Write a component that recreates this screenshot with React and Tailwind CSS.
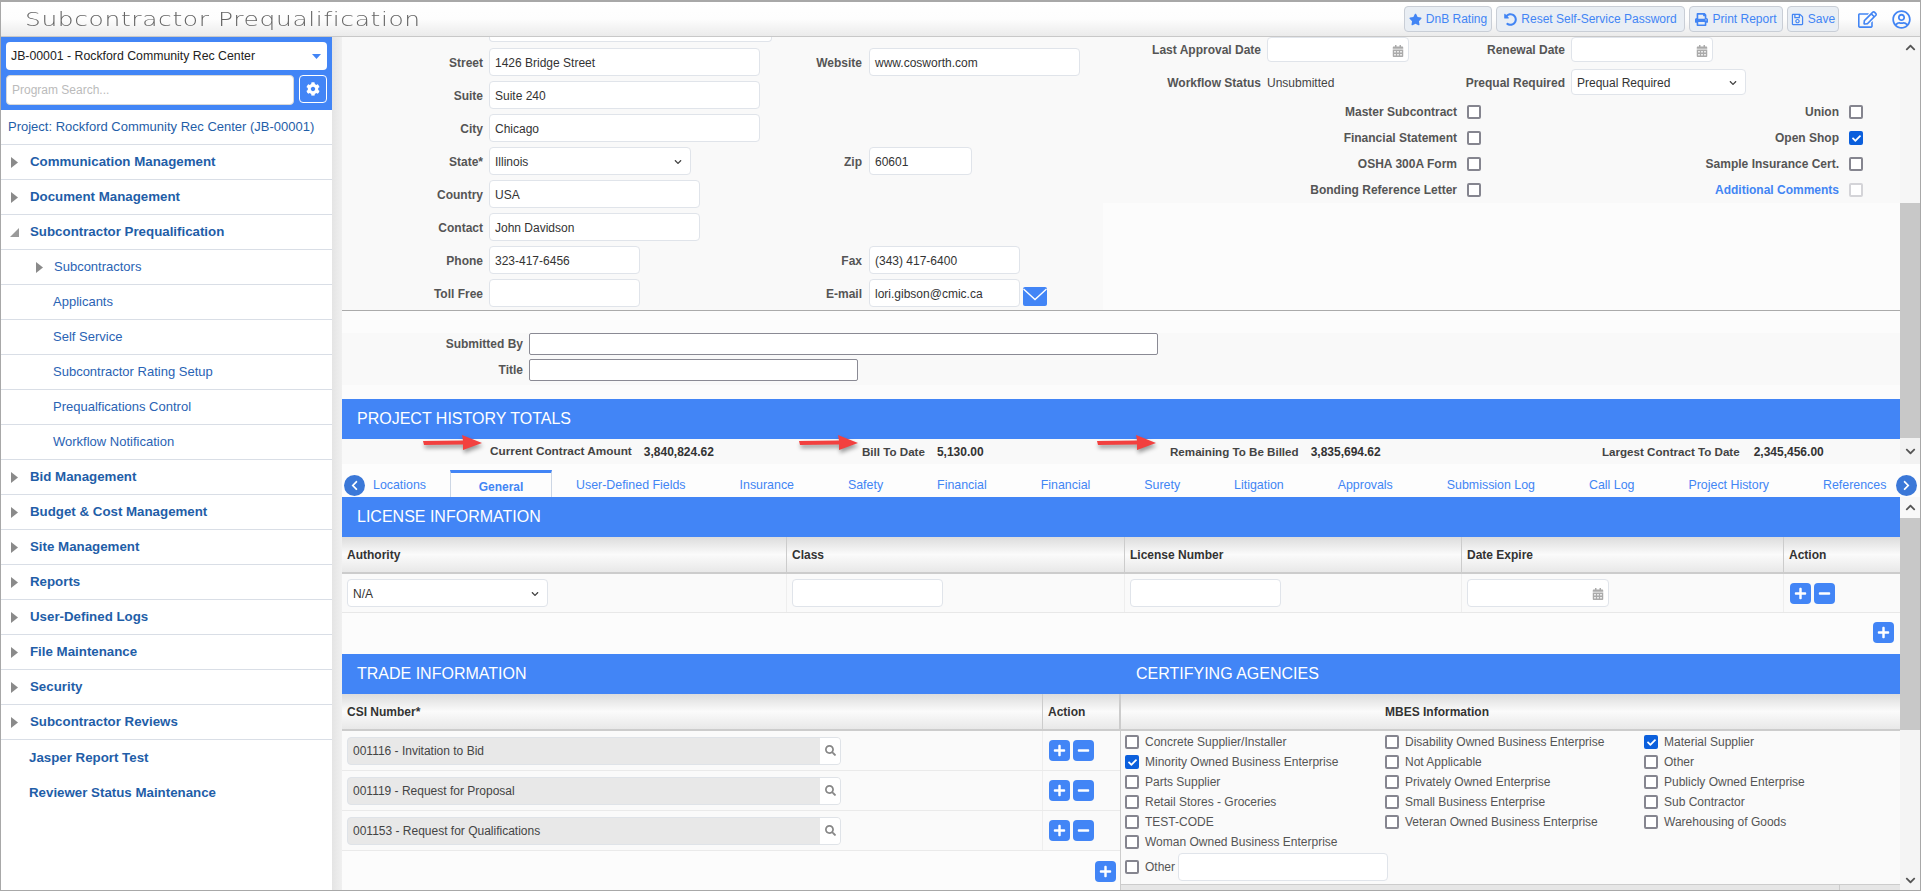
import React from "react";
import {
  FaStar, FaUndoAlt, FaPrint, FaRegSave, FaRegEdit, FaRegUserCircle, FaCog, FaCalendarAlt, FaSearch,
  FaPlus, FaMinus, FaChevronUp, FaChevronDown, FaChevronLeft, FaChevronRight, FaCheck,
} from "react-icons/fa";

const Tri = ({ open }) =>
  open ? (
    <svg width="9" height="9" viewBox="0 0 9 9" className="shrink-0"><polygon points="9,0 9,9 0,9" fill="#9a9a9a" /></svg>
  ) : (
    <svg width="7" height="11" viewBox="0 0 7 11" className="shrink-0"><polygon points="0,0 7,5.5 0,11" fill="#8a8a8a" /></svg>
  );

const menuItems = [
  { t: "Communication Management", k: "top" },
  { t: "Document Management", k: "top" },
  { t: "Subcontractor Prequalification", k: "open" },
  { t: "Subcontractors", k: "subtri" },
  { t: "Applicants", k: "sub" },
  { t: "Self Service", k: "sub" },
  { t: "Subcontractor Rating Setup", k: "sub" },
  { t: "Prequalfications Control", k: "sub" },
  { t: "Workflow Notification", k: "sub" },
  { t: "Bid Management", k: "top" },
  { t: "Budget & Cost Management", k: "top" },
  { t: "Site Management", k: "top" },
  { t: "Reports", k: "top" },
  { t: "User-Defined Logs", k: "top" },
  { t: "File Maintenance", k: "top" },
  { t: "Security", k: "top" },
  { t: "Subcontractor Reviews", k: "top" },
  { t: "Jasper Report Test", k: "plain" },
  { t: "Reviewer Status Maintenance", k: "plain" },
];

function MenuRow({ t, k }) {
  const bold = "text-[13.3px] font-bold text-[#1f5ea8]";
  const last = t === "Jasper Report Test" || t === "Reviewer Status Maintenance";
  return (
    <div className={`flex h-[35px] items-center ${last ? "" : "border-b border-[#d9dee6]"}`}>
      {k === "top" && (
        <>
          <span className="ml-[10px] w-[19px]"><Tri /></span>
          <span className={bold}>{t}</span>
        </>
      )}
      {k === "open" && (
        <>
          <span className="ml-[9px] w-[20px]"><Tri open /></span>
          <span className={bold}>{t}</span>
        </>
      )}
      {k === "plain" && <span className={`ml-[28px] ${bold}`}>{t}</span>}
      {k === "subtri" && (
        <>
          <span className="ml-[35px] w-[18px]"><Tri /></span>
          <span className="text-[13px] text-[#2a63b4]">{t}</span>
        </>
      )}
      {k === "sub" && <span className="ml-[52px] text-[13px] text-[#2a63b4]">{t}</span>}
    </div>
  );
}

function TopBtn({ icon, w, children }) {
  return (
    <div className={`flex h-[26px] ${w} items-center justify-center gap-[4px] rounded-[4px] border border-[#c9ced6] bg-[#e9eef4] text-[12px] text-[#4285f4]`}>
      <span className="text-[13px]">{icon}</span>
      {children}
    </div>
  );
}

const Label = ({ children, className = "" }) => (
  <div className={`text-right text-[12px] font-bold text-[#555] ${className}`}>{children}</div>
);

const Field = ({ w, children, className = "", h = "h-[28px]" }) => (
  <div className={`flex ${h} ${w} shrink-0 items-center rounded-[4px] border border-[#e0e4ea] bg-white px-[5px] pt-[2px] text-[12px] text-[#333] ${className}`}>
    {children}
  </div>
);

const Sel = ({ w, children, h = "h-[28px]" }) => (
  <Field w={w} h={h} className="justify-between pr-[8px]">
    <span>{children}</span>
    <FaChevronDown className="text-[8px] text-[#444]" />
  </Field>
);

const DateF = ({ w, h = "h-[26px]" }) => (
  <Field w={w} h={h} className="justify-end pr-[4px]">
    <FaCalendarAlt className="text-[12px] text-[#aaa]" />
  </Field>
);

const Cb = ({ on, dim }) => (
  <span
    className={`inline-flex h-[14px] w-[14px] shrink-0 items-center justify-center rounded-[2px] border-2 ${
      on ? "border-[#0b5fdc] bg-[#0b5fdc]" : dim ? "border-[#d4d4d8] bg-white" : "border-[#85858f] bg-white"
    }`}
  >
    {on && <FaCheck className="text-[9px] text-white" />}
  </span>
);

const Band = ({ children, className = "" }) => (
  <div className={`flex h-[40px] shrink-0 items-center bg-[#4285f6] pl-[15px] text-[16px] text-white ${className}`}>{children}</div>
);

const TH = ({ className = "", children }) => (
  <div className={`flex h-full items-center border-r border-[#ccc] px-[5px] text-[12px] font-bold text-[#333] ${className}`}>{children}</div>
);

const thead = "h-[37px] shrink-0 border-b-2 border-[#ccc] bg-linear-to-b from-[#dcdcdc] via-[#fbfbfb] to-[#e8e8e8]";

const IconBtn = ({ minus }) => (
  <span className="flex h-[21px] w-[21px] shrink-0 items-center justify-center rounded-[4px] bg-[#4285f6] text-[13px] text-white">
    {minus ? <FaMinus /> : <FaPlus />}
  </span>
);

const Arrow = ({ className }) => (
  <svg width="60" height="20" viewBox="0 0 60 20" className={`absolute ${className} drop-shadow-[1px_3px_2px_rgba(0,0,0,0.4)]`}>
    <polygon points="0,6 40,5.5 39,0 59,8 40,15 40,9.5 1,10" fill="#f2403f" />
  </svg>
);

const Scroll = ({ children, className = "" }) => (
  <div className={`flex shrink-0 items-center justify-center text-[11px] text-[#555] ${className}`}>{children}</div>
);

const Row = ({ label, children, mid }) => (
  <div className="grid h-[28px] grid-cols-[147px_289px_91px_1fr] items-center">
    <Label className="pr-[6px] pt-[2px]">{label}</Label>
    <div>{children}</div>
    {mid ? <Label className="pr-[7px] pt-[2px]">{mid[0]}</Label> : <div />}
    {mid ? mid[1] : <div />}
  </div>
);

const CheckRow = ({ a, b, on, blue, dim }) => (
  <div className="grid h-[26px] grid-cols-[354px_24px_358px_24px] items-center">
    <Label>{a}</Label>
    <span className="flex pl-[10px]"><Cb /></span>
    <Label className={blue ? "text-[#4285f4]" : ""}>{b}</Label>
    <span className="flex pl-[10px]"><Cb on={on} dim={dim} /></span>
  </div>
);

const tabs = ["User-Defined Fields", "Insurance", "Safety", "Financial", "Financial", "Surety", "Litigation", "Approvals", "Submission Log", "Call Log", "Project History", "References"];

const mbes = [
  ["Concrete Supplier/Installer", "Disability Owned Business Enterprise", "Material Supplier"],
  ["Minority Owned Business Enterprise", "Not Applicable", "Other"],
  ["Parts Supplier", "Privately Owned Enterprise", "Publicly Owned Enterprise"],
  ["Retail Stores - Groceries", "Small Business Enterprise", "Sub Contractor"],
  ["TEST-CODE", "Veteran Owned Business Enterprise", "Warehousing of Goods"],
  ["Woman Owned Business Enterprise", "", ""],
];

const Check = ({ t }) =>
  t ? (
    <div className="flex h-[20px] items-center gap-[6px] text-[12px] text-[#555]">
      <Cb on={t === "Minority Owned Business Enterprise" || t === "Material Supplier"} />
      <span>{t}</span>
    </div>
  ) : (
    <div />
  );

const trades = ["001116 - Invitation to Bid", "001119 - Request for Proposal", "001153 - Request for Qualifications"];

export default function App() {
  return (
    <div className="flex h-[891px] w-[1921px] flex-col overflow-hidden border-x border-y border-[#a8a8a8] border-t-2 bg-[#fcfcfc] [font-family:Liberation_Sans,Arial,sans-serif]">
      {/* top bar */}
      <header className="flex h-[35px] shrink-0 items-center justify-between border-b border-[#c8c8c8] bg-linear-to-b from-white via-[#fdfdfd] to-[#ebebeb] pl-[24px] pr-[9px]">
        <div className="origin-left scale-x-[1.246] text-[20px] font-extralight tracking-[0.5px] text-[#666] [font-family:DejaVu_Sans,sans-serif]">Subcontractor Prequalification</div>
        <div className="flex items-center">
          <div className="flex items-center gap-[4px]">
            <TopBtn w="w-[88px]" icon={<FaStar />}>DnB Rating</TopBtn>
            <TopBtn w="w-[189px]" icon={<FaUndoAlt />}>Reset Self-Service Password</TopBtn>
            <TopBtn w="w-[94px]" icon={<FaPrint />}>Print Report</TopBtn>
            <TopBtn w="w-[52px]" icon={<FaRegSave />}>Save</TopBtn>
          </div>
          <FaRegEdit className="ml-[19px] text-[19px] text-[#4285f4]" />
          <FaRegUserCircle className="ml-[15px] text-[19px] text-[#4285f4]" />
        </div>
      </header>

      <div className="flex min-h-0 flex-1">
        {/* sidebar */}
        <aside className="w-[331px] shrink-0 bg-white">
          <div className="flex h-[73px] flex-col gap-[5px] bg-[#4285f6] px-[5px] pt-[5px]">
            <div className="flex h-[28px] w-[321px] items-center justify-between rounded-[4px] bg-white pl-[5px] pr-[6px] text-[12.3px] text-[#222]">
              <span>JB-00001 - Rockford Community Rec Center</span>
              <svg width="9" height="5" viewBox="0 0 9 5"><polygon points="0,0 9,0 4.5,5" fill="#4285f6" /></svg>
            </div>
            <div className="flex items-start gap-[5px]">
              <div className="flex h-[30px] w-[288px] items-center rounded-[4px] border border-[#d8d8d8] bg-white pl-[5px] text-[12px] text-[#bbb]">Program Search...</div>
              <div className="flex h-[28px] w-[28px] items-center justify-center rounded-[4px] border border-white bg-[#4285f6] text-[14px] text-white"><FaCog /></div>
            </div>
          </div>
          <div className="flex h-[35px] items-center border-b border-[#d9dee6] pl-[7px] text-[13px] text-[#1f5ea8]">Project: Rockford Community Rec Center (JB-00001)</div>
          {menuItems.map((m, i) => <MenuRow key={i} {...m} />)}
        </aside>
        <div className="w-[10px] shrink-0 bg-linear-to-r from-[#e4e4e4] to-[#f0f0f0]" />

        {/* main */}
        <main className="flex min-w-0 flex-1 flex-col">
          {/* upper pane */}
          <div className="flex h-[427px] shrink-0">
            <div className="min-w-0 flex-1">
              <div className="flex h-[273px]">
                <div className="h-[273px] w-[761px] shrink-0 bg-[#f9f9f9]">
                  <div className="ml-[147px] h-[5px] w-[283px] rounded-b-[4px] border-x border-b border-[#e0e4ea] bg-white" />
                  <div className="mt-[6px] flex flex-col gap-[5px]">
                    <Row label="Street" mid={["Website", <Field w="w-[211px]">www.cosworth.com</Field>]}><Field w="w-[271px]">1426 Bridge Street</Field></Row>
                    <Row label="Suite"><Field w="w-[271px]">Suite 240</Field></Row>
                    <Row label="City"><Field w="w-[271px]">Chicago</Field></Row>
                    <Row label="State*" mid={["Zip", <Field w="w-[103px]">60601</Field>]}><Sel w="w-[202px]">Illinois</Sel></Row>
                    <Row label="Country"><Field w="w-[211px]">USA</Field></Row>
                    <Row label="Contact"><Field w="w-[211px]">John Davidson</Field></Row>
                    <Row label="Phone" mid={["Fax", <Field w="w-[151px]">(343) 417-6400</Field>]}><Field w="w-[151px]">323-417-6456</Field></Row>
                    <Row
                      label="Toll Free"
                      mid={[
                        "E-mail",
                        <div className="flex items-center gap-[3px]">
                          <Field w="w-[151px]">lori.gibson@cmic.ca</Field>
                          <svg width="24" height="19" viewBox="0 0 24 19" className="mt-[6px]">
                            <rect width="24" height="19" rx="2" fill="#4285f6" />
                            <path d="M0.5 2 L12 12.5 L23.5 2" fill="none" stroke="#fff" strokeWidth="1.4" />
                          </svg>
                        </div>,
                      ]}
                    >
                      <Field w="w-[151px]" />
                    </Row>
                  </div>
                </div>
                <div className="h-[166px] flex-1 bg-[#f9f9f9] pl-0">
                  <div className="flex h-[25px] items-center">
                    <Label className="w-[158px] pr-0">Last Approval Date</Label>
                    <div className="ml-[6px] flex w-[304px] items-center justify-between">
                      <DateF w="w-[142px]" h="h-[25px]" />
                      <Label className="pr-[6px]">Renewal Date</Label>
                    </div>
                    <DateF w="w-[142px]" h="h-[25px]" />
                  </div>
                  <div className="mt-[7px] flex h-[26px] items-center">
                    <Label className="w-[158px] pt-[2px]">Workflow Status</Label>
                    <div className="ml-[6px] flex w-[304px] items-center justify-between pt-[2px] text-[12px] text-[#444]">
                      <span>Unsubmitted</span>
                      <Label className="pr-[6px]">Prequal Required</Label>
                    </div>
                    <Sel w="w-[175px]" h="h-[26px]">Prequal Required</Sel>
                  </div>
                  <div className="mt-[4px]">
                    <CheckRow a="Master Subcontract" b="Union" />
                    <CheckRow a="Financial Statement" b="Open Shop" on />
                    <CheckRow a="OSHA 300A Form" b="Sample Insurance Cert." />
                    <CheckRow a="Bonding Reference Letter" b="Additional Comments" blue dim />
                  </div>
                </div>
              </div>
              <div className="h-px bg-[#aaa]" />
              <div className="mt-[22px] flex h-[52px] flex-col gap-[4px] bg-[#f9f9f9]">
                <div className="flex h-[22px] items-center">
                  <Label className="w-[181px] text-[11.5px]">Submitted By</Label>
                  <div className="ml-[6px] h-[22px] w-[629px] rounded-[2px] border border-[#8a8a94] bg-white" />
                </div>
                <div className="flex h-[22px] items-center">
                  <Label className="w-[181px] text-[11.5px]">Title</Label>
                  <div className="ml-[6px] h-[22px] w-[329px] rounded-[2px] border border-[#8a8a94] bg-white" />
                </div>
              </div>
              <Band className="mt-[14px]">PROJECT HISTORY TOTALS</Band>
              <div className="grid h-[26px] grid-cols-[520px_308px_432px_1fr] items-center bg-[#f9f9f9] text-[12px] font-bold text-[#444]">
                <div className="relative flex items-center gap-[12px] pl-[148px]">
                  <Arrow className="left-[81px] top-[-8px]" />
                  <span className="text-[11.8px]">Current Contract Amount</span><span className="text-[#333]">3,840,824.62</span>
                </div>
                <div className="relative flex items-center gap-[12px]">
                  <Arrow className="left-[-63px] top-[-8px]" />
                  <span className="text-[11.6px]">Bill To Date</span><span className="text-[#333]">5,130.00</span>
                </div>
                <div className="relative flex items-center gap-[12px]">
                  <Arrow className="left-[-73px] top-[-8px]" />
                  <span className="text-[11.6px]">Remaining To Be Billed</span><span className="text-[#333]">3,835,694.62</span>
                </div>
                <div className="flex items-center gap-[14px]">
                  <span className="text-[11.6px]">Largest Contract To Date</span><span className="text-[#333]">2,345,456.00</span>
                </div>
              </div>
            </div>
            <div className="flex w-[20px] shrink-0 flex-col bg-[#f6f6f6]">
              <Scroll className="h-[20px]"><FaChevronUp /></Scroll>
              <div className="h-[146px]" />
              <div className="h-[235px] bg-[#c8c8c8]" />
              <Scroll className="h-[26px] bg-[#f2f2f2]"><FaChevronDown /></Scroll>
            </div>
          </div>

          {/* tabs */}
          <div className="flex h-[33px] shrink-0 items-end whitespace-nowrap bg-[#fdfdfd] pl-[2px] pr-[3px] text-[12.4px] text-[#4285f4]">
            <span className="mb-[1px] flex h-[21px] w-[21px] shrink-0 items-center justify-center rounded-full bg-[#3b78d8] text-[11px] text-white"><FaChevronLeft /></span>
            <div className="ml-[8px] flex items-end gap-[54px]">
              <span className="shrink-0 pb-[2px]">Locations</span>
              <span className="-mx-[30px] flex h-[27px] w-[102px] shrink-0 items-center justify-center border-x border-t-[3px] border-[#ccd6e4] border-t-[#4285f6] pt-[3px] text-[12px] font-bold">General</span>
              {tabs.map((t, i) => <span key={i} className="shrink-0 pb-[2px]">{t}</span>)}
            </div>
            <span className="mb-[1px] ml-auto flex h-[21px] w-[21px] shrink-0 items-center justify-center rounded-full bg-[#3b78d8] text-[11px] text-white"><FaChevronRight /></span>
          </div>

          {/* lower pane */}
          <div className="flex min-h-0 flex-1">
            <div className="flex min-w-0 flex-1 flex-col">
              <Band>LICENSE INFORMATION</Band>
              <div className={`grid grid-cols-[445px_338px_337px_322px_1fr] ${thead}`}>
                <TH>Authority</TH><TH>Class</TH><TH>License Number</TH><TH>Date Expire</TH><TH className="border-r-0">Action</TH>
              </div>
              <div className="grid h-[39px] shrink-0 grid-cols-[445px_338px_337px_322px_1fr] items-center border-b border-[#e8e8e8] bg-[#fafafa]">
                <div className="flex h-full items-center border-r border-[#eee] px-[5px]"><Sel w="w-[201px]">N/A</Sel></div>
                <div className="flex h-full items-center border-r border-[#eee] px-[5px]"><Field w="w-[151px]" /></div>
                <div className="flex h-full items-center border-r border-[#eee] px-[5px]"><Field w="w-[151px]" /></div>
                <div className="flex h-full items-center border-r border-[#eee] px-[5px]"><DateF w="w-[142px]" h="h-[28px]" /></div>
                <div className="flex h-full items-center gap-[3px] px-[6px]"><IconBtn /><IconBtn minus /></div>
              </div>
              <div className="flex h-[41px] shrink-0 justify-end bg-[#fcfcfc] pr-[6px] pt-[9px]">
                <IconBtn />
              </div>
              <Band className="shrink-0">
                <span className="w-[779px]">TRADE INFORMATION</span>
                <span>CERTIFYING AGENCIES</span>
              </Band>
              <div className="flex min-h-0 flex-1">
                <div className="flex w-[778px] shrink-0 flex-col">
                  <div className={`grid grid-cols-[701px_1fr] ${thead}`}>
                    <TH>CSI Number*</TH><TH>Action</TH>
                  </div>
                  {trades.map((t) => (
                    <div key={t} className="grid h-[40px] shrink-0 grid-cols-[701px_1fr] items-center border-b border-[#eaeaea] bg-[#fafafa]">
                      <div className="flex h-full items-center border-r border-[#eee] px-[5px]">
                        <div className="flex h-[28px] w-[494px] items-center overflow-hidden rounded-[4px] border border-[#dfe3e8] bg-[#e8e8e8] text-[12px] text-[#444]">
                          <span className="flex-1 pl-[5px]">{t}</span>
                          <span className="flex h-full w-[20px] items-center justify-center bg-white text-[11px] text-[#888]"><FaSearch /></span>
                        </div>
                      </div>
                      <div className="flex items-center gap-[3px] pl-[6px]"><IconBtn /><IconBtn minus /></div>
                    </div>
                  ))}
                  <div className="flex justify-end bg-[#fcfcfc] pr-[4px] pt-[10px]"><IconBtn /></div>
                </div>
                <div className="flex min-w-0 flex-1 flex-col border-l border-[#ccc]">
                  <div className={`${thead}`}>
                    <div className="flex h-full w-[632px] items-center justify-center text-[12px] font-bold text-[#333]">MBES Information</div>
                  </div>
                  <div className="flex-1 bg-[#fafafa] pl-[4px] pt-px">
                    <div className="grid grid-cols-[260px_259px_1fr]">
                      {mbes.flat().map((t, i) => <Check key={i} t={t} />)}
                    </div>
                    <div className="mt-px flex h-[28px] items-center text-[12px] text-[#555]">
                      <Cb /><span className="ml-[6px]">Other</span>
                      <div className="ml-[3px] h-[28px] w-[210px] rounded-[4px] border border-[#e0e4ea] bg-white" />
                    </div>
                  </div>
                  <div className="flex h-[6px] shrink-0 justify-end border-t border-[#ccc] bg-[#e6e6e6] pr-[60px]"><div className="h-full w-px bg-[#ccc]" /></div>
                </div>
              </div>
            </div>
            <div className="flex w-[20px] shrink-0 flex-col bg-[#f4f4f4]">
              <Scroll className="h-[21px] bg-[#f8f8f8]"><FaChevronUp /></Scroll>
              <div className="h-[212px] bg-[#c8c8c8]" />
              <div className="flex-1" />
              <Scroll className="h-[20px]"><FaChevronDown /></Scroll>
            </div>
          </div>
        </main>
      </div>
    </div>
  );
}
